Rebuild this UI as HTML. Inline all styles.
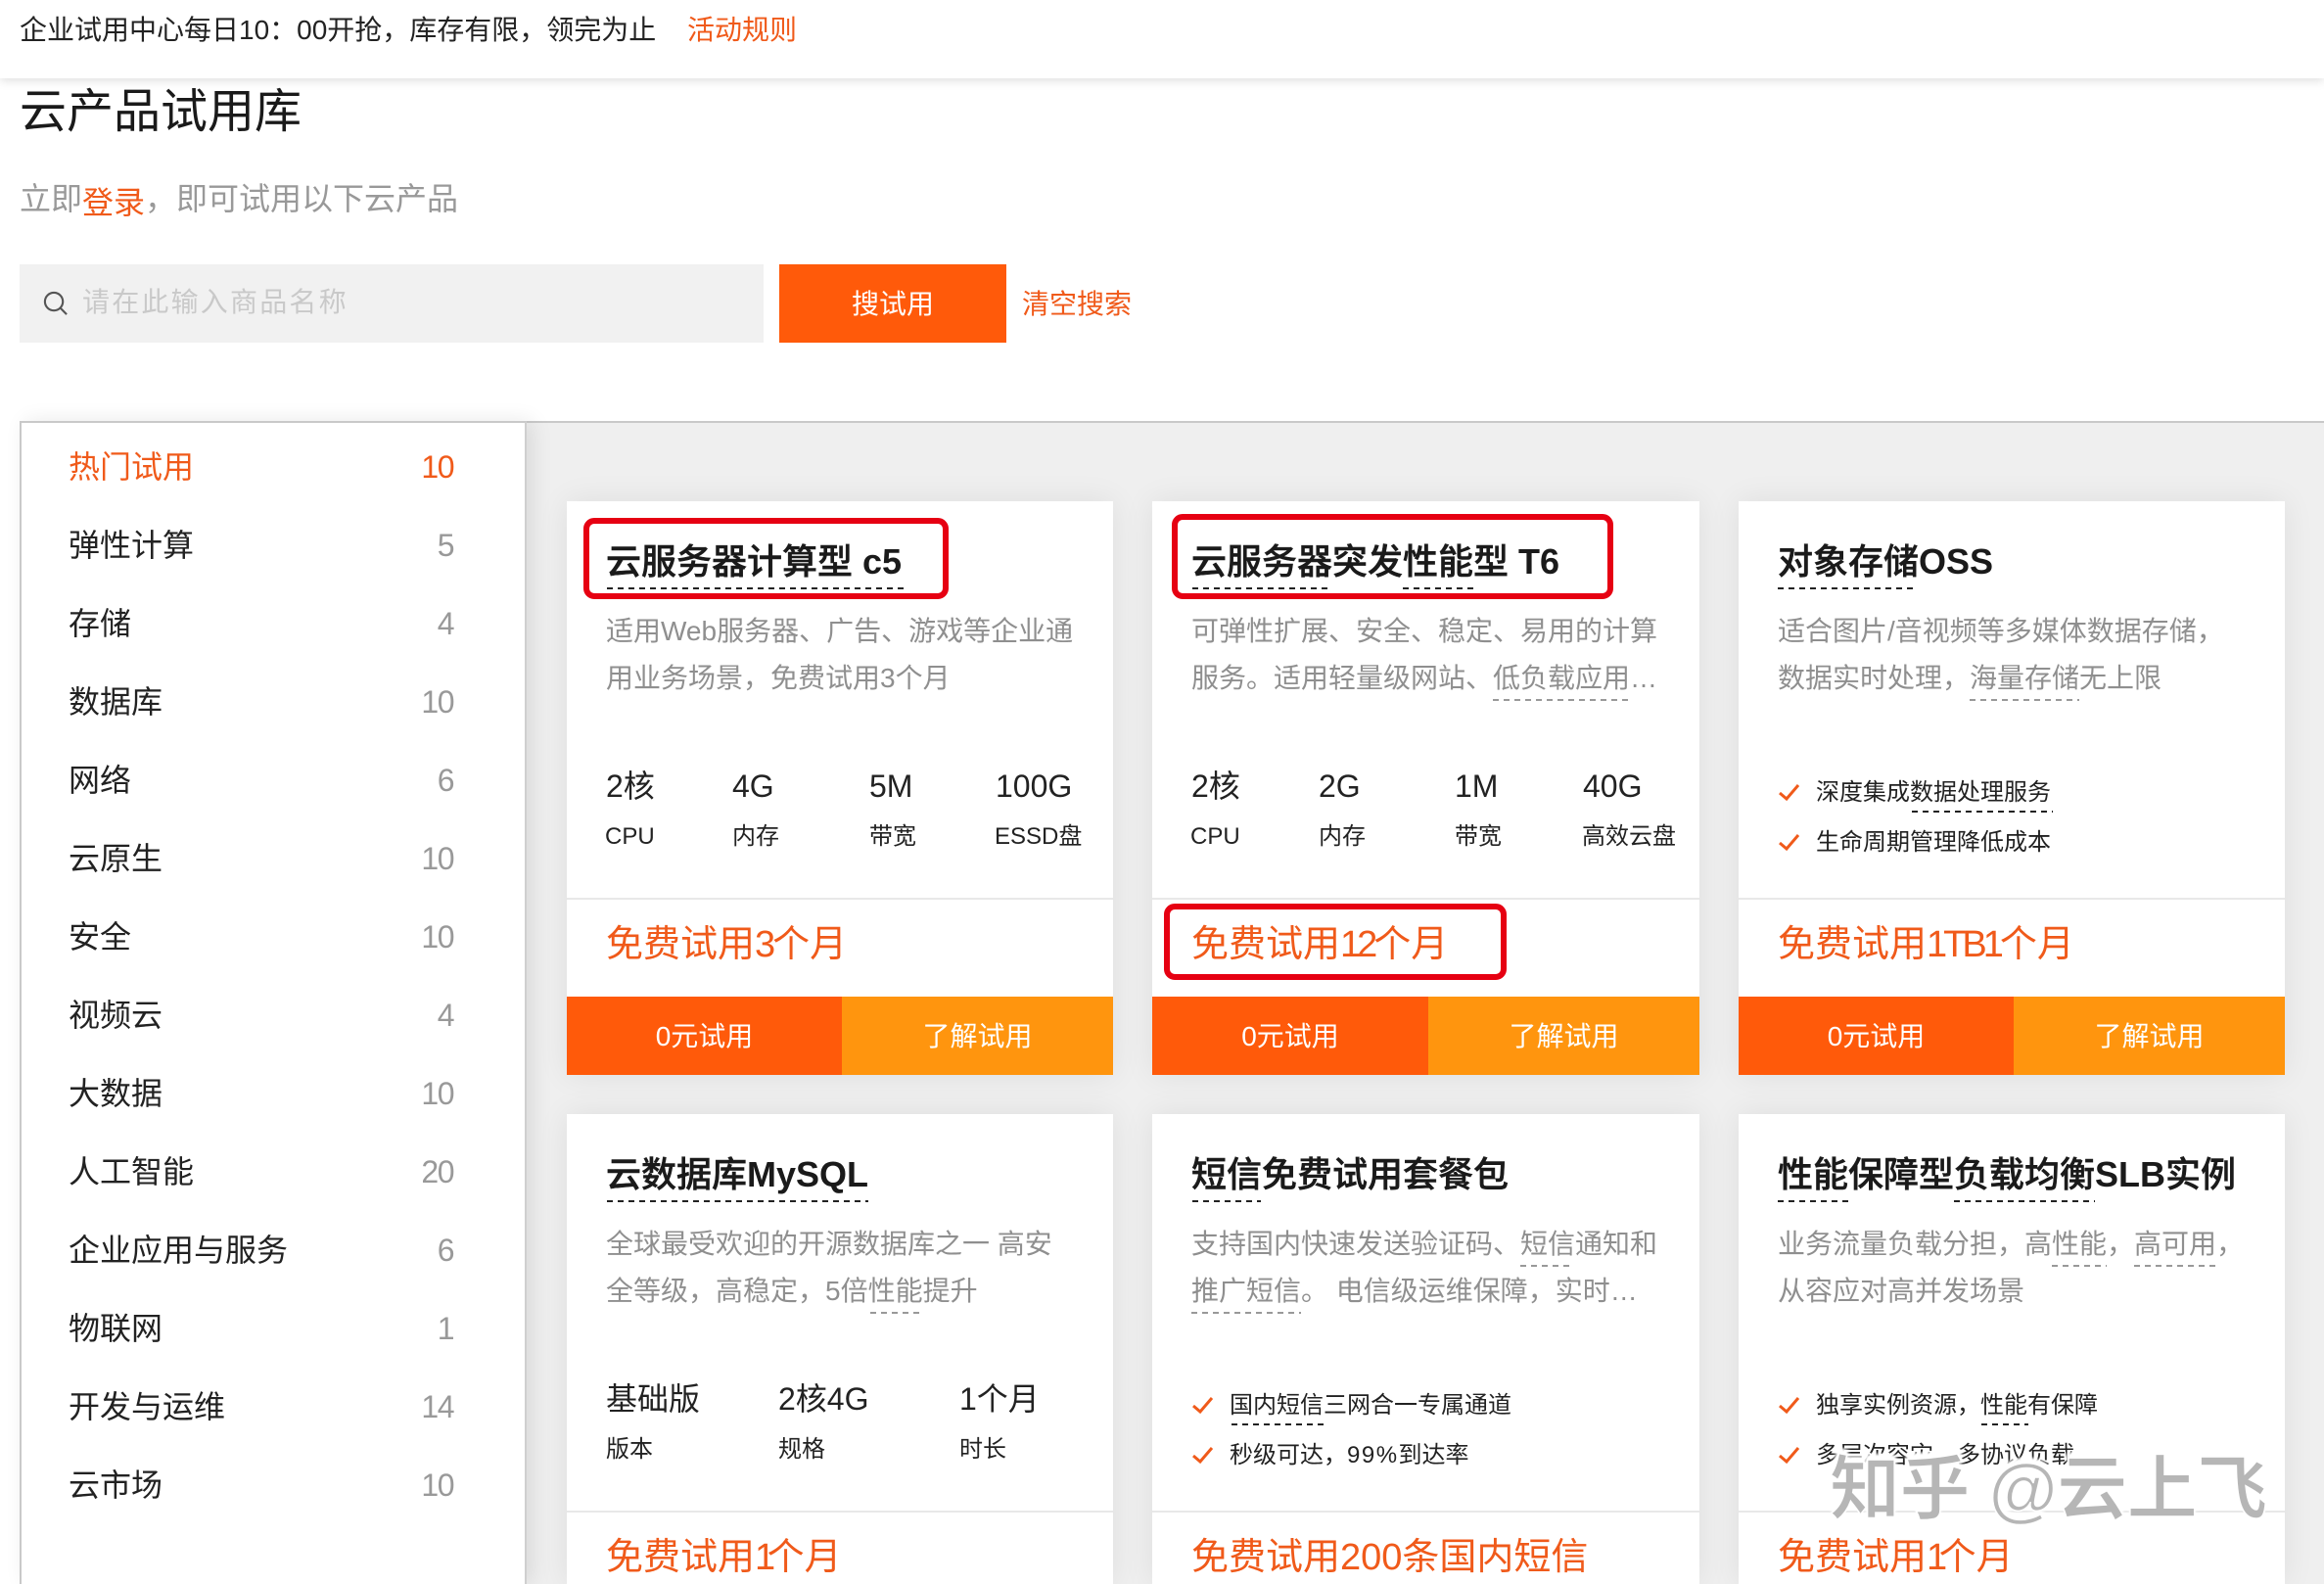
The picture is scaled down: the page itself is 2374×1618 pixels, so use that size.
<!DOCTYPE html>
<html lang="zh"><head><meta charset="utf-8"><title>云产品试用库</title>
<style>
*{box-sizing:border-box;margin:0;padding:0}
html,body{width:2374px;height:1618px;overflow:hidden;background:#fff}
body{position:relative;font-family:"Liberation Sans","Noto Sans CJK SC",sans-serif;color:#222}
.a,.a *{white-space:nowrap}
.a{position:absolute}
#top{left:0;top:0;width:2374px;height:80px;background:#fff;box-shadow:0 2px 10px rgba(0,0,0,.14);z-index:3}
#main{left:20px;top:430px;width:2354px;height:1188px;background:#efefef;border-top:2px solid #c9c9c9}
#side{left:20px;top:430px;width:518px;height:1188px;background:#fff;border:2px solid #c9c9c9;border-bottom:none;border-right:2px solid #cfcfcf;box-shadow:6px 0 20px rgba(0,0,0,.09)}
.it{left:70px;font-size:32px;line-height:40px;height:40px;color:#222}
.ct{left:379px;width:84px;text-align:right;font-size:32px;line-height:40px;height:40px;color:#999;letter-spacing:-1.5px}
.it.o,.ct.o,.o{color:#f05a1a}
.card{width:558px;height:586px;background:#fff;box-shadow:0 0 30px rgba(0,0,0,.075)}
.card.w{width:559px}
.card.s{height:480px}
.t{left:40px;top:42px;font-size:36px;line-height:40px;font-weight:500;-webkit-text-stroke:.5px #1a1a1a;color:#1a1a1a}
.t b{font-weight:700;-webkit-text-stroke:0}
.de{left:40px;font-size:28px;line-height:48px;margin-top:1px;color:#8f8f8f}
.v{font-size:32px;line-height:40px;top:271px;color:#222}
.l{font-size:24px;line-height:30px;top:328px;color:#222}
.li{left:79px;font-size:24px;line-height:30px;margin-top:1px;color:#222}
.ck{left:41px;width:21px;height:17px}
.hr{left:0;top:405px;width:100%;height:2px;background:#e8e8e8}
.p{left:40px;top:433px;font-size:38px;line-height:40px;color:#f05a1a}
.b1,.b2{top:506px;height:80px;line-height:81px;font-size:28px;color:#fff;text-align:center}
.b1{left:0;width:281px;background:#ff5a0a}
.b2{left:281px;width:277px;background:#ff950e}
.w .b1{width:282px}.w .b2{left:282px}
.d{position:absolute;height:2px;z-index:2;background:repeating-linear-gradient(90deg,#222 0 6px,transparent 6px 11px)}
.g{background:repeating-linear-gradient(90deg,#999 0 6px,transparent 6px 11px)}
.r{position:absolute;border:6px solid #e60012;border-radius:11px;z-index:4}
#wm{left:1869px;top:1482px;font-size:72px;line-height:80px;font-weight:700;letter-spacing:-.5px;color:#b6b6b6;z-index:5;-webkit-text-stroke:1.5px #fff;text-shadow:0 -3px 2px #fff,2px -5px 3px #fff,-2px -5px 3px #fff}
</style></head><body>
<div class="a" id="top">
<div class="a" style="left:20px;top:11px;font-size:28px;line-height:40px;color:#222">企业试用中心每日10：00开抢，库存有限，领完为止</div>
<div class="a o" style="left:702px;top:11px;font-size:28px;line-height:40px">活动规则</div>
</div>
<div class="a" style="left:20px;top:87px;font-size:48px;line-height:56px;color:#1a1a1a">云产品试用库</div>
<div class="a" style="left:20px;top:181px;font-size:32px;line-height:44px;color:#999">立即<span class="o" style="position:relative;top:4px">登录</span>，即可试用以下云产品</div>
<div class="a" style="left:20px;top:270px;width:760px;height:80px;background:#f1f1f1"></div>
<svg class="a" style="left:43px;top:296px" width="27" height="27" viewBox="0 0 28 28" fill="none" stroke="#555" stroke-width="2.2"><circle cx="12.5" cy="12.5" r="9.5"/><path d="M19.5 19.5L26 26"/></svg>
<div class="a" style="left:84px;top:289px;font-size:28px;line-height:40px;letter-spacing:2.2px;color:#c9c9c9">请在此输入商品名称</div>
<div class="a" style="left:796px;top:270px;width:232px;height:80px;background:#ff5a0a;color:#fff;font-size:28px;line-height:81px;text-align:center">搜试用</div>
<div class="a o" style="left:1044px;top:291px;font-size:28px;line-height:40px">清空搜索</div>

<div class="a" id="main"></div>
<div class="a" id="side"></div>
<div class="a it o" style="top:457px">热门试用</div><div class="a ct o" style="top:457px">10</div>
<div class="a it" style="top:537px">弹性计算</div><div class="a ct" style="top:537px">5</div>
<div class="a it" style="top:617px">存储</div><div class="a ct" style="top:617px">4</div>
<div class="a it" style="top:697px">数据库</div><div class="a ct" style="top:697px">10</div>
<div class="a it" style="top:777px">网络</div><div class="a ct" style="top:777px">6</div>
<div class="a it" style="top:857px">云原生</div><div class="a ct" style="top:857px">10</div>
<div class="a it" style="top:937px">安全</div><div class="a ct" style="top:937px">10</div>
<div class="a it" style="top:1017px">视频云</div><div class="a ct" style="top:1017px">4</div>
<div class="a it" style="top:1097px">大数据</div><div class="a ct" style="top:1097px">10</div>
<div class="a it" style="top:1177px">人工智能</div><div class="a ct" style="top:1177px">20</div>
<div class="a it" style="top:1257px">企业应用与服务</div><div class="a ct" style="top:1257px">6</div>
<div class="a it" style="top:1337px">物联网</div><div class="a ct" style="top:1337px">1</div>
<div class="a it" style="top:1417px">开发与运维</div><div class="a ct" style="top:1417px">14</div>
<div class="a it" style="top:1497px">云市场</div><div class="a ct" style="top:1497px">10</div>

<!-- row 1 -->
<div class="a card" style="left:579px;top:512px">
<div class="a t">云服务器计算型 <b>c5</b></div>
<div class="a de" style="top:108px">适用Web服务器、广告、游戏等企业通</div>
<div class="a de" style="top:156px">用业务场景，免费试用3个月</div>
<div class="a v" style="left:40px">2核</div><div class="a v" style="left:169px">4G</div><div class="a v" style="left:309px">5M</div><div class="a v" style="left:438px">100G</div>
<div class="a l" style="left:39px">CPU</div><div class="a l" style="left:169px">内存</div><div class="a l" style="left:309px">带宽</div><div class="a l" style="left:437px">ESSD盘</div>
<div class="a hr"></div><div class="a p">免费试用<span style="letter-spacing:-3px">3</span>个月</div>
<div class="a b1">0元试用</div><div class="a b2">了解试用</div>
</div>
<div class="a card w" style="left:1177px;top:512px">
<div class="a t">云服务器突发性能型 <b>T6</b></div>
<div class="a de" style="top:108px">可弹性扩展、安全、稳定、易用的计算</div>
<div class="a de" style="top:156px">服务。适用轻量级网站、低负载应用…</div>
<div class="a v" style="left:40px">2核</div><div class="a v" style="left:170px">2G</div><div class="a v" style="left:309px">1M</div><div class="a v" style="left:440px">40G</div>
<div class="a l" style="left:39px">CPU</div><div class="a l" style="left:170px">内存</div><div class="a l" style="left:309px">带宽</div><div class="a l" style="left:439px">高效云盘</div>
<div class="a hr"></div><div class="a p">免费试用<span style="letter-spacing:-4px">12</span>个月</div>
<div class="a b1">0元试用</div><div class="a b2">了解试用</div>
</div>
<div class="a card" style="left:1776px;top:512px">
<div class="a t">对象存储<b>OSS</b></div>
<div class="a de" style="top:108px">适合图片/音视频等多媒体数据存储，</div>
<div class="a de" style="top:156px">数据实时处理，海量存储无上限</div>
<svg class="a ck" style="top:289px" viewBox="0 0 21 17" fill="none" stroke="#f05a1a" stroke-width="3"><path d="M1 9L8 15L20 1"/></svg>
<div class="a li" style="top:282px">深度集成数据处理服务</div>
<svg class="a ck" style="top:340px" viewBox="0 0 21 17" fill="none" stroke="#f05a1a" stroke-width="3"><path d="M1 9L8 15L20 1"/></svg>
<div class="a li" style="top:333px">生命周期管理降低成本</div>
<div class="a hr"></div><div class="a p">免费试用<span style="letter-spacing:-4px">1TB1</span>个月</div>
<div class="a b1">0元试用</div><div class="a b2">了解试用</div>
</div>
<!-- row 2 -->
<div class="a card s" style="left:579px;top:1138px">
<div class="a t">云数据库<b>MySQL</b></div>
<div class="a de" style="top:108px">全球最受欢迎的开源数据库之一 高安</div>
<div class="a de" style="top:156px">全等级，高稳定，5倍性能提升</div>
<div class="a v" style="left:40px">基础版</div><div class="a v" style="left:216px">2核4G</div><div class="a v" style="left:401px">1个月</div>
<div class="a l" style="left:40px">版本</div><div class="a l" style="left:216px">规格</div><div class="a l" style="left:401px">时长</div>
<div class="a hr"></div><div class="a p">免费试用<span style="letter-spacing:-8.5px">1</span>个月</div>
</div>
<div class="a card s w" style="left:1177px;top:1138px">
<div class="a t">短信免费试用套餐包</div>
<div class="a de" style="top:108px">支持国内快速发送验证码、短信通知和</div>
<div class="a de" style="top:156px">推广短信。 电信级运维保障，实时…</div>
<svg class="a ck" style="top:289px" viewBox="0 0 21 17" fill="none" stroke="#f05a1a" stroke-width="3"><path d="M1 9L8 15L20 1"/></svg>
<div class="a li" style="top:282px">国内短信三网合一专属通道</div>
<svg class="a ck" style="top:340px" viewBox="0 0 21 17" fill="none" stroke="#f05a1a" stroke-width="3"><path d="M1 9L8 15L20 1"/></svg>
<div class="a li" style="top:333px">秒级可达，<span style="letter-spacing:1.5px">99%</span>到达率</div>
<div class="a hr"></div><div class="a p">免费试用200条国内短信</div>
</div>
<div class="a card s" style="left:1776px;top:1138px">
<div class="a t">性能保障型负载均衡<b>SLB</b>实例</div>
<div class="a de" style="top:108px">业务流量负载分担，高性能，高可用，</div>
<div class="a de" style="top:156px">从容应对高并发场景</div>
<svg class="a ck" style="top:289px" viewBox="0 0 21 17" fill="none" stroke="#f05a1a" stroke-width="3"><path d="M1 9L8 15L20 1"/></svg>
<div class="a li" style="top:282px">独享实例资源，性能有保障</div>
<svg class="a ck" style="top:340px" viewBox="0 0 21 17" fill="none" stroke="#f05a1a" stroke-width="3"><path d="M1 9L8 15L20 1"/></svg>
<div class="a li" style="top:333px">多层次容灾，多协议负载</div>
<div class="a hr"></div><div class="a p">免费试用<span style="letter-spacing:-8.5px">1</span>个月</div>
</div>

<!-- dashed underlines -->
<div class="d" style="left:620px;top:600px;width:306px"></div>
<div class="d" style="left:1218px;top:600px;width:143px"></div>
<div class="d" style="left:1433px;top:600px;width:72px"></div>
<div class="d" style="left:1816px;top:600px;width:143px"></div>
<div class="d g" style="left:1525px;top:714px;width:140px"></div>
<div class="d g" style="left:2012px;top:714px;width:112px"></div>
<div class="d" style="left:1953px;top:828px;width:144px"></div>
<div class="d" style="left:620px;top:1226px;width:267px"></div>
<div class="d" style="left:1218px;top:1226px;width:70px"></div>
<div class="d" style="left:1816px;top:1226px;width:72px"></div>
<div class="d" style="left:1996px;top:1226px;width:144px"></div>
<div class="d g" style="left:889px;top:1340px;width:55px"></div>
<div class="d g" style="left:1553px;top:1292px;width:55px"></div>
<div class="d g" style="left:1217px;top:1340px;width:112px"></div>
<div class="d g" style="left:2096px;top:1292px;width:56px"></div>
<div class="d g" style="left:2180px;top:1292px;width:84px"></div>
<div class="d" style="left:1258px;top:1454px;width:95px"></div>
<div class="d" style="left:2024px;top:1454px;width:48px"></div>

<!-- red boxes -->
<div class="r" style="left:596px;top:529px;width:373px;height:83px"></div>
<div class="r" style="left:1197px;top:525px;width:451px;height:87px"></div>
<div class="r" style="left:1189px;top:923px;width:350px;height:78px"></div>

<div class="a" id="wm">知乎 @云上飞</div>
</body></html>
